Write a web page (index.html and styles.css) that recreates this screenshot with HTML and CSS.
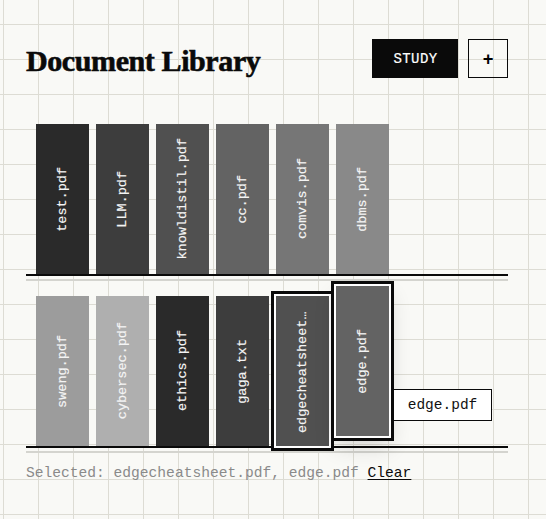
FILE: index.html
```html
<!DOCTYPE html>
<html lang="en">
<head>
<meta charset="utf-8">
<title>Document Library</title>
<link rel="stylesheet" href="styles.css">
</head>
<body>
<main class="page">
  <header class="header">
    <h1 class="title">Document Library</h1>
    <div class="actions">
      <button class="btn-study" type="button">STUDY</button>
      <button class="btn-add" type="button">+</button>
    </div>
  </header>

  <section class="library">
    <div class="shelf-wrap">
      <div class="shelf">
        <div class="book c0"><span class="spine">test.pdf</span></div>
        <div class="book c1"><span class="spine">LLM.pdf</span></div>
        <div class="book c2"><span class="spine">knowldistil.pdf</span></div>
        <div class="book c3"><span class="spine">cc.pdf</span></div>
        <div class="book c4"><span class="spine">comvis.pdf</span></div>
        <div class="book c5"><span class="spine">dbms.pdf</span></div>
      </div>
    </div>

    <div class="shelf-wrap">
      <div class="shelf">
        <div class="book c6"><span class="spine">sweng.pdf</span></div>
        <div class="book c7"><span class="spine">cybersec.pdf</span></div>
        <div class="book c0"><span class="spine">ethics.pdf</span></div>
        <div class="book c1"><span class="spine">gaga.txt</span></div>
        <div class="book c2 selected"><span class="spine">edgecheatsheet.pdf</span></div>
        <div class="book c3 selected hovered">
          <span class="spine">edge.pdf</span>
          <div class="tooltip">edge.pdf</div>
        </div>
      </div>
    </div>
  </section>

  <p class="selection">Selected: edgecheatsheet.pdf, edge.pdf <button class="btn-clear" type="button">Clear</button></p>
</main>
</body>
</html>
```

FILE: styles.css
```css
* {
  box-sizing: border-box;
}

html, body {
  margin: 0;
}

body {
  background-color: #f9f9f6;
  background-image:
    linear-gradient(to right, #dddcd4 1px, transparent 1px),
    linear-gradient(to bottom, #dddcd4 1px, transparent 1px);
  background-size: 35px 35px;
  background-position: 3px 24px;
  font-family: "Liberation Mono", "DejaVu Sans Mono", monospace;
  color: #111;
}

.page {
  width: 508px;
  padding: 39px 0 0 26px;
}

/* Header */
.header {
  display: flex;
  align-items: center;
  justify-content: space-between;
}

.title {
  margin: 5px 0 0;
  font-family: "Liberation Serif", "DejaVu Serif", serif;
  font-weight: 700;
  font-size: 30px;
  line-height: 30px;
  letter-spacing: -0.4px;
  color: #0a0a0a;
  -webkit-text-stroke: 0.6px #0a0a0a;
}

.actions {
  display: flex;
  gap: 10px;
}

.btn-study {
  width: 86px;
  height: 39px;
  border: 0;
  background: #0a0a0a;
  color: #fff;
  font-family: "Liberation Mono", monospace;
  font-size: 14px;
  letter-spacing: 0.4px;
  padding: 0 0 0 1px;
  -webkit-text-stroke: 0.2px #fff;
}

.btn-add {
  width: 40px;
  height: 39px;
  border: 1px solid #0a0a0a;
  background: transparent;
  color: #000;
  font-family: "DejaVu Sans Mono", monospace;
  font-size: 17px;
  font-weight: 700;
  padding: 0;
}

/* Shelves */
.library {
  margin-top: 46px;
  display: flex;
  flex-direction: column;
  gap: 15px;
}

.shelf-wrap {
  padding-bottom: 3px;
  border-bottom: 2px solid #d4d4cf;
}

.shelf {
  display: flex;
  align-items: flex-end;
  gap: 7px;
  padding: 0 10px;
  border-bottom: 2px solid #0a0a0a;
}

.book {
  position: relative;
  width: 53px;
  height: 150px;
  display: flex;
  align-items: center;
  justify-content: center;
}

.c0 { background: #2a2a2a; }
.c1 { background: #3d3d3d; }
.c2 { background: #505050; }
.c3 { background: #636363; }
.c4 { background: #767676; }
.c5 { background: #898989; }
.c6 { background: #9c9c9c; }
.c7 { background: #afafaf; }

.spine {
  writing-mode: vertical-rl;
  transform: rotate(180deg);
  max-height: 124px;
  overflow: hidden;
  white-space: nowrap;
  text-overflow: ellipsis;
  font-size: 13.5px;
  line-height: 1;
  color: #f4f4f4;
  -webkit-text-stroke: 0.15px #f4f4f4;
}

.book.selected {
  box-shadow: 0 0 0 2px #fff, 0 0 0 5px #0a0a0a;
}

.book.hovered {
  z-index: 2;
  transform: translateY(-10px);
  box-shadow: 0 0 0 2px #fff, 0 0 0 5px #0a0a0a, 0 10px 22px rgba(0, 0, 0, 0.16);
}

.tooltip {
  position: absolute;
  left: calc(100% + 4px);
  top: 103px;
  width: 99px;
  height: 32px;
  display: flex;
  align-items: center;
  justify-content: center;
  background: #fff;
  border: 1px solid #0a0a0a;
  font-size: 14.5px;
  color: #111;
  white-space: nowrap;
}

/* Selection summary */
.selection {
  margin: 10px 0 0;
  font-size: 14.6px;
  line-height: 20px;
  color: #8a8a8a;
}

.btn-clear {
  border: 0;
  padding: 0;
  background: none;
  font: inherit;
  color: #0a0a0a;
  text-decoration: underline;
  text-underline-offset: 2px;
}
```
